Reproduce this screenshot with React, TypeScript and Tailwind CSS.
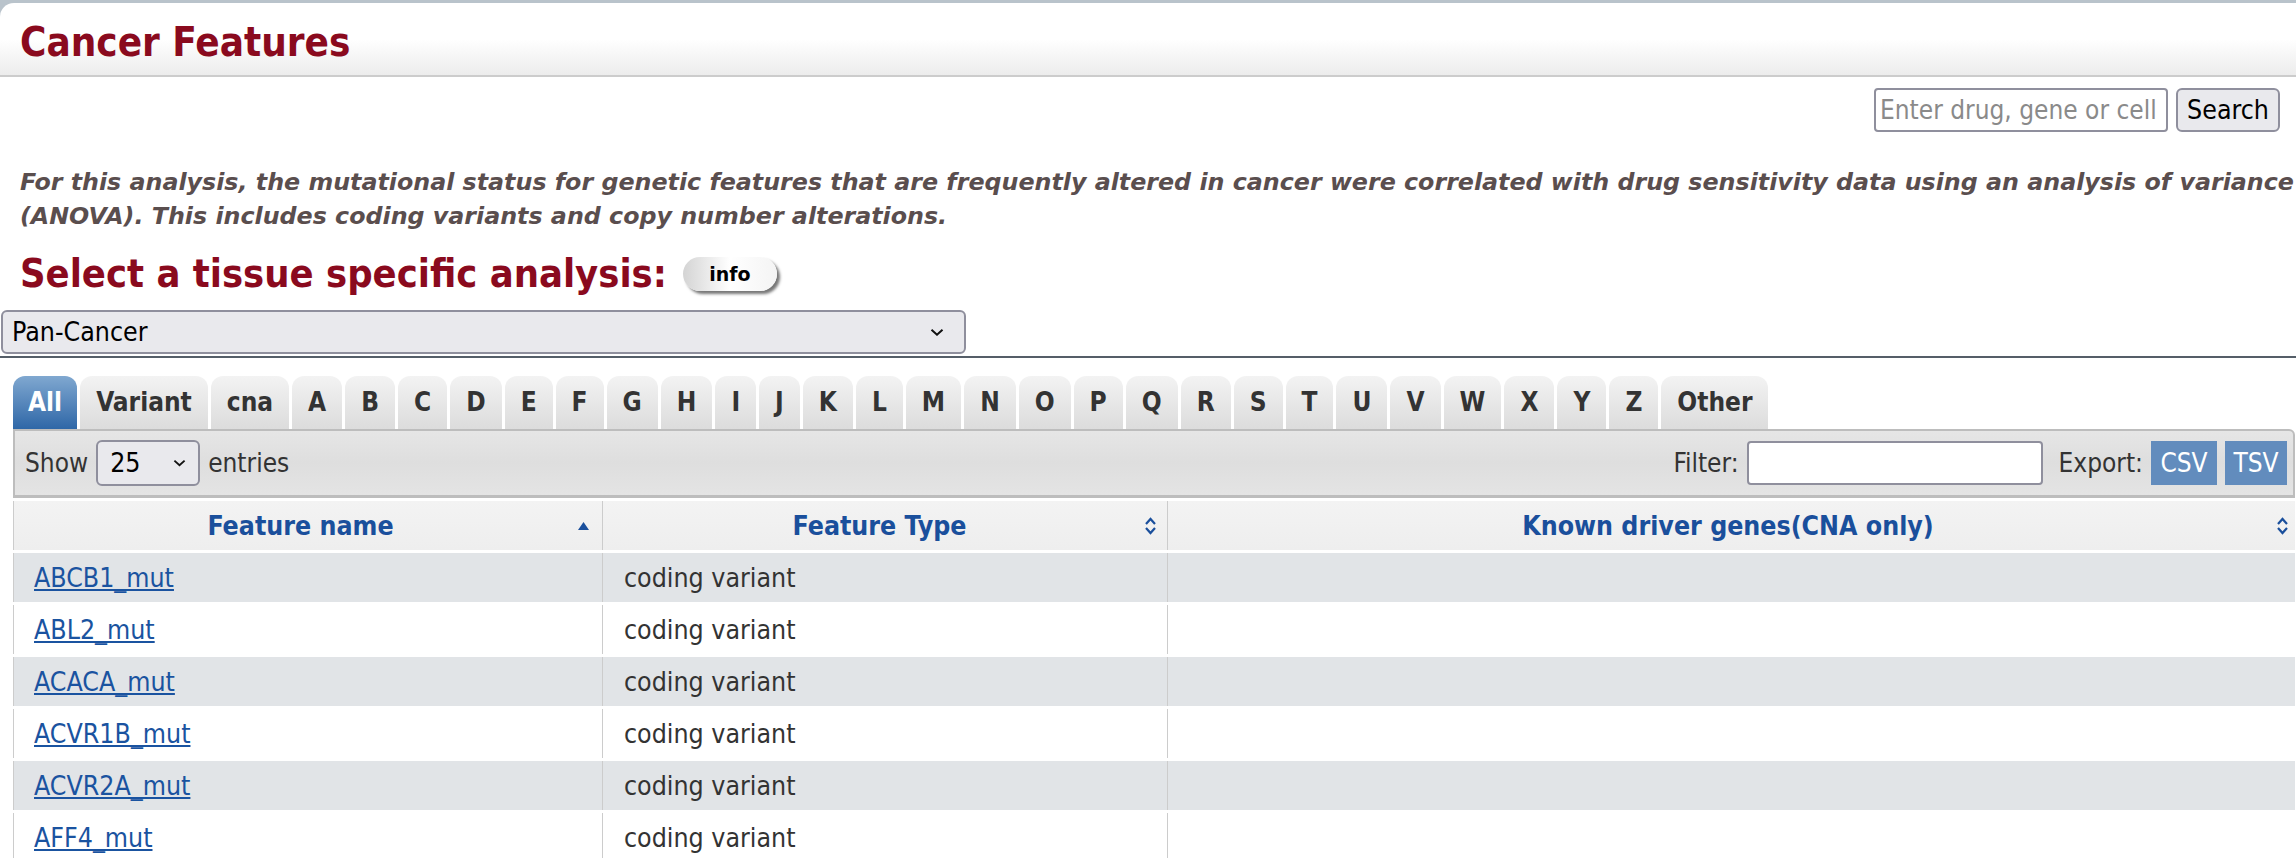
import React from "react";

const rows: [string, string, string][] = [
  ["ABCB1_mut", "coding variant", ""],
  ["ABL2_mut", "coding variant", ""],
  ["ACACA_mut", "coding variant", ""],
  ["ACVR1B_mut", "coding variant", ""],
  ["ACVR2A_mut", "coding variant", ""],
  ["AFF4_mut", "coding variant", ""],
];

const tabs = [
  "All", "Variant", "cna", "A", "B", "C", "D", "E", "F", "G", "H", "I", "J", "K", "L", "M",
  "N", "O", "P", "Q", "R", "S", "T", "U", "V", "W", "X", "Y", "Z", "Other",
];

function SortBoth() {
  return (
    <svg width="13" height="22" viewBox="0 0 13 22" className="shrink-0">
      <path d="M2 9 L6.5 4 L11 9" stroke="#1a4f9c" strokeWidth="2.2" fill="none" />
      <path d="M2 13 L6.5 18 L11 13" stroke="#1a4f9c" strokeWidth="2.2" fill="none" />
    </svg>
  );
}

function SortUp() {
  return (
    <svg width="13" height="11" viewBox="0 0 13 11" className="shrink-0">
      <path d="M1 10 L6.5 2 L12 10 Z" fill="#1a4f9c" />
    </svg>
  );
}

function Chevron({ size = 14 }: { size?: number }) {
  return (
    <svg width={size} height={size * 0.6} viewBox="0 0 14 8">
      <path d="M1.5 1.5 L7 6.5 L12.5 1.5" stroke="#111" strokeWidth="2" fill="none" />
    </svg>
  );
}

export default function App() {
  return (
    <div className="w-[2296px] h-[858px] overflow-hidden bg-white font-['DejaVu_Sans_Condensed','DejaVu_Sans',sans-serif] [font-stretch:condensed] text-[#333]">
      {/* header */}
      <div className="bg-[#b9c3cb] pt-[3px]">
        <div className="h-[74px] rounded-tl-[14px] bg-gradient-to-b from-white via-white to-[#ececec] border-b-2 border-[#cccccc] pl-[20px] flex items-center">
          <h1 className="text-[40px] font-bold text-[#8a0a1e] leading-none pt-[6px]">Cancer Features</h1>
        </div>
      </div>

      {/* search */}
      <div className="flex justify-end items-center gap-[8px] pr-[16px] mt-[11px]">
        <input
          placeholder="Enter drug, gene or cell"
          className="w-[294px] h-[44px] border-2 border-[#8f8f9d] rounded-[4px] px-[4px] text-[26px] text-[#111] placeholder:text-[#8a8a8a] outline-none"
        />
        <button className="h-[44px] w-[104px] bg-[#e9e9ed] border-2 border-[#8f8f9d] rounded-[6px] text-[26.5px] text-black leading-none">
          Search
        </button>
      </div>

      {/* description */}
      <p className="mt-[33px] pl-[20px] font-['DejaVu_Sans',sans-serif] [font-stretch:normal] italic font-bold text-[23.75px] leading-[34px] text-[#5a4e4e] whitespace-nowrap">
        For this analysis, the mutational status for genetic features that are frequently altered in cancer were correlated with drug sensitivity data using an analysis of variance
        <br />
        (ANOVA). This includes coding variants and copy number alterations.
      </p>

      {/* tissue select */}
      <div className="flex items-center gap-[16px] pl-[20px] mt-[20px] h-[42px]">
        <h2 className="text-[39.5px] font-bold text-[#8a0a1e] leading-none">Select a tissue specific analysis:</h2>
        <button className="w-[94px] h-[34px] rounded-full bg-gradient-to-r from-[#d4d4d4] via-white to-[#f4f4f4] shadow-[3px_3px_3px_#777] font-['DejaVu_Sans',sans-serif] [font-stretch:normal] font-bold text-[19px] text-black leading-none">
          info
        </button>
      </div>
      <div className="relative mt-[15px] ml-[1px] w-[965px] h-[44px]">
        <select className="appearance-none w-full h-full bg-[#e9e9ed] border-2 border-[#8f8f9d] rounded-[6px] pl-[9px] text-[26.5px] text-black outline-none leading-none">
          <option>Pan-Cancer</option>
        </select>
        <div className="absolute right-[22px] top-[18px] pointer-events-none">
          <Chevron />
        </div>
      </div>
      <div className="mt-[2px] h-[2px] bg-[#555e68]" />

      {/* tabs */}
      <div className="mt-[18px] ml-[13px] flex gap-[3px] h-[53px]">
        {tabs.map((t, i) => (
          <div
            key={t}
            className={
              i === 0
                ? "px-[15px] flex items-center rounded-t-[12px] bg-gradient-to-b from-[#80a8d0] to-[#2e67a7] text-white font-bold text-[26px]"
                : "px-[16px] flex items-center rounded-t-[12px] bg-gradient-to-b from-[#f3f3f3] to-[#dcdcdc] text-[#333] font-bold text-[26px]"
            }
          >
            {t}
          </div>
        ))}
      </div>

      {/* table wrapper */}
      <div className="ml-[13px] mr-[1px]">
        {/* toolbar */}
        <div className="h-[69px] border-2 border-[#bdbdbd] border-b-[3px] rounded-tr-[6px] bg-gradient-to-b from-[#e6e6e6] via-[#dedede] to-[#e4e4e4] flex items-center pl-[10px] pr-[6px] text-[26px] text-[#333]">
          <span>Show</span>
          <div className="relative ml-[8px] w-[104px] h-[46px]">
            <select className="appearance-none w-full h-full bg-[#e9e9ed] border-2 border-[#8f8f9d] rounded-[6px] pl-[12px] text-[26.5px] text-black outline-none leading-none">
              <option>25</option>
            </select>
            <div className="absolute right-[14px] top-[19px] pointer-events-none">
              <Chevron size={13} />
            </div>
          </div>
          <span className="ml-[8px]">entries</span>
          <div className="flex-1" />
          <span>Filter:</span>
          <input className="ml-[8px] w-[296px] h-[44px] bg-white border-2 border-[#8f8f9d] rounded-[4px] outline-none" />
          <span className="ml-[16px]">Export:</span>
          <button className="ml-[8px] h-[44px] w-[66px] bg-[#628cbd] text-white text-[26px] leading-none">CSV</button>
          <button className="ml-[8px] h-[44px] w-[62px] bg-[#628cbd] text-white text-[26px] leading-none">TSV</button>
        </div>

        {/* table header */}
        <div className="mt-[3px] flex h-[49px] bg-gradient-to-b from-[#f3f3f3] to-[#eeeeee] text-[26.5px] font-bold text-[#1a4f9c]">
          <div className="w-[589px] border-l border-[#cccccc] flex items-center pr-[12px]">
            <span className="flex-1 text-center pl-[10px]">Feature name</span>
            <SortUp />
          </div>
          <div className="w-[565px] border-l border-[#cccccc] flex items-center pr-[10px]">
            <span className="flex-1 text-center pl-[12px]">Feature Type</span>
            <SortBoth />
          </div>
          <div className="flex-1 border-l border-[#cccccc] flex items-center pr-[6px]">
            <span className="flex-1 text-center pl-[12px]">Known driver genes(CNA only)</span>
            <SortBoth />
          </div>
        </div>

        {/* rows */}
        <div className="mt-[3px] flex flex-col gap-[3px] text-[26.5px]">
          {rows.map((r, i) => (
            <div key={r[0]} className={"flex h-[49px] " + (i % 2 === 0 ? "bg-[#e1e4e7]" : "bg-white")}>
              <div className="w-[589px] border-l border-[#cccccc] flex items-center pl-[20px]">
                <a href="#" className="text-[#1a53a0] underline">
                  {r[0]}
                </a>
              </div>
              <div className="w-[565px] border-l border-[#cccccc] flex items-center pl-[21px] text-[#333]">{r[1]}</div>
              <div className="flex-1 border-l border-[#cccccc] flex items-center pl-[20px]">{r[2]}</div>
            </div>
          ))}
        </div>
      </div>
    </div>
  );
}
